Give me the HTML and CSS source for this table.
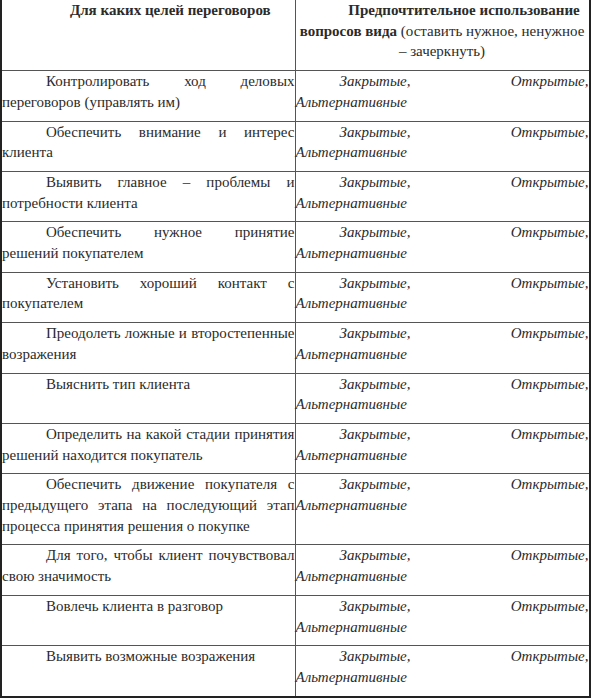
FILE: index.html
```html
<!DOCTYPE html>
<html lang="ru">
<head>
<meta charset="utf-8">
<title>Вопросы</title>
<link rel="stylesheet" href="styles.css">
</head>
<body>
<table class="grid">
  <colgroup><col class="c1"><col class="c2"></colgroup>
  <thead>
    <tr>
      <th class="head"><b>Для каких целей переговоров</b></th>
      <th class="head"><b>Предпочтительное использование вопросов вида</b> (оставить нужное, ненужное – зачеркнуть)</th>
    </tr>
  </thead>
  <tbody>
    <tr><td>Контролировать ход деловых переговоров (управлять им)</td><td class="it">Закрытые, Открытые, Альтернативные</td></tr>
    <tr><td>Обеспечить внимание и интерес клиента</td><td class="it">Закрытые, Открытые, Альтернативные</td></tr>
    <tr><td>Выявить главное – проблемы и потребности клиента</td><td class="it">Закрытые, Открытые, Альтернативные</td></tr>
    <tr><td>Обеспечить нужное принятие решений покупателем</td><td class="it">Закрытые, Открытые, Альтернативные</td></tr>
    <tr><td>Установить хороший контакт с покупателем</td><td class="it">Закрытые, Открытые, Альтернативные</td></tr>
    <tr><td>Преодолеть ложные и второстепенные возражения</td><td class="it">Закрытые, Открытые, Альтернативные</td></tr>
    <tr><td>Выяснить тип клиента</td><td class="it">Закрытые, Открытые, Альтернативные</td></tr>
    <tr><td>Определить на какой стадии принятия решений находится покупатель</td><td class="it">Закрытые, Открытые, Альтернативные</td></tr>
    <tr><td>Обеспечить движение покупателя с предыдущего этапа на последующий этап процесса принятия решения о покупке</td><td class="it">Закрытые, Открытые, Альтернативные</td></tr>
    <tr><td>Для того, чтобы клиент почувствовал свою значимость</td><td class="it">Закрытые, Открытые, Альтернативные</td></tr>
    <tr><td>Вовлечь клиента в разговор</td><td class="it">Закрытые, Открытые, Альтернативные</td></tr>
    <tr><td>Выявить возможные возражения</td><td class="it">Закрытые, Открытые, Альтернативные</td></tr>
  </tbody>
</table>
</body>
</html>
```
FILE: styles.css
```css
html, body {
  margin: 0;
  padding: 0;
  background: #ffffff;
}
body {
  font-family: "Liberation Serif", "Times New Roman", serif;
  font-size: 15px;
  color: #2b2b2b;
}
.grid {
  border-collapse: collapse;
  table-layout: fixed;
  width: 591px;
  border-left: 2px solid #222;
  border-right: 3px solid #222;
  border-bottom: 2px solid #222;
}
.c1 { width: 294px; }
.c2 { width: 295px; }
.grid th, .grid td {
  border: 1px solid #555;
  vertical-align: top;
  padding: 0 0 8px 0;
  line-height: 20.7px;
  text-indent: 44px;
}
.grid th {
  border-top: none;
  font-weight: normal;
  text-align: center;
  padding-bottom: 8px;
}
.grid td {
  text-align: justify;
}
.grid td.it {
  font-style: italic;
}
.grid td:first-child, .grid th:first-child { border-left: 2px solid #222; }
.grid td:last-child, .grid th:last-child { border-right: 3px solid #222; }
.grid tbody tr:last-child td { border-bottom: 2px solid #222; }
```
